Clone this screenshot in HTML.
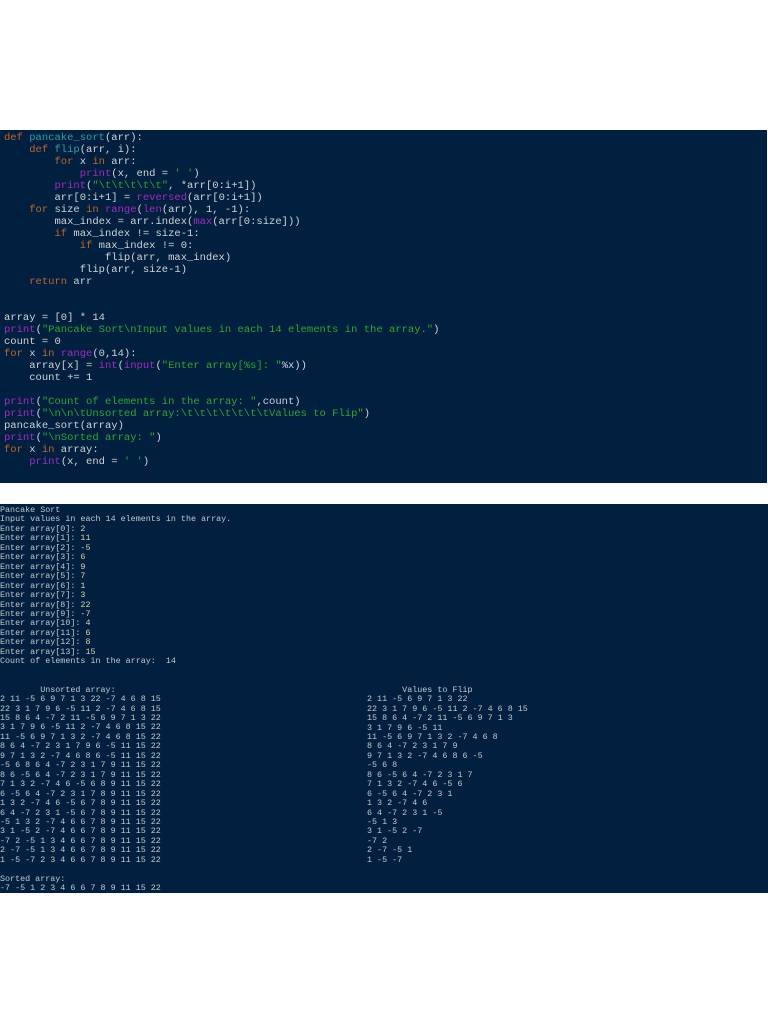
<!DOCTYPE html>
<html><head><meta charset="utf-8"><style>
html,body{margin:0;padding:0;background:#fff;width:768px;height:1024px;overflow:hidden;position:relative}
.p{position:absolute;left:0;background:#01203f;overflow:hidden}
pre{margin:0;position:absolute;font-family:"Liberation Mono",monospace;white-space:pre}
.code{font-size:10.53px;line-height:12px;color:#cfd3d6;left:4px;top:132px}
.k{color:#c0652a}.f{color:#2b9eb0}.b{color:#a42ac0}.s{color:#2fa62f}
.o{font-size:8.38px;line-height:9.46px;color:#c4c8cc}
.n{color:#d8d2a8}
</style></head><body>
<div class="p" style="top:130px;width:767px;height:353px"></div>
<pre class="code"><span class="k">def</span> <span class="f">pancake_sort</span>(arr):
    <span class="k">def</span> <span class="f">flip</span>(arr, i):
        <span class="k">for</span> x <span class="k">in</span> arr:
            <span class="b">print</span>(x, end = <span class="s">' '</span>)
        <span class="b">print</span>(<span class="s">"\t\t\t\t\t"</span>, *arr[0:i+1])
        arr[0:i+1] = <span class="b">reversed</span>(arr[0:i+1])
    <span class="k">for</span> size <span class="k">in</span> <span class="b">range</span>(<span class="b">len</span>(arr), 1, -1):
        max_index = arr.index(<span class="b">max</span>(arr[0:size]))
        <span class="k">if</span> max_index != size-1:
            <span class="k">if</span> max_index != 0:
                flip(arr, max_index)
            flip(arr, size-1)
    <span class="k">return</span> arr


array = [0] * 14
<span class="b">print</span>(<span class="s">"Pancake Sort\nInput values in each 14 elements in the array."</span>)
count = 0
<span class="k">for</span> x <span class="k">in</span> <span class="b">range</span>(0,14):
    array[x] = <span class="b">int</span>(<span class="b">input</span>(<span class="s">"Enter array[%s]: "</span>%x))
    count += 1

<span class="b">print</span>(<span class="s">"Count of elements in the array: "</span>,count)
<span class="b">print</span>(<span class="s">"\n\n\tUnsorted array:\t\t\t\t\t\t\tValues to Flip"</span>)
pancake_sort(array)
<span class="b">print</span>(<span class="s">"\nSorted array: "</span>)
<span class="k">for</span> x <span class="k">in</span> array:
    <span class="b">print</span>(x, end = <span class="s">' '</span>)</pre>
<div class="p" style="top:504px;width:768px;height:389px">
<pre class="o" style="left:0;top:2px">Pancake Sort
Input values in each 14 elements in the array.
Enter array[0]: <span class="n">2</span>
Enter array[1]: <span class="n">11</span>
Enter array[2]: <span class="n">-5</span>
Enter array[3]: <span class="n">6</span>
Enter array[4]: <span class="n">9</span>
Enter array[5]: <span class="n">7</span>
Enter array[6]: <span class="n">1</span>
Enter array[7]: <span class="n">3</span>
Enter array[8]: <span class="n">22</span>
Enter array[9]: <span class="n">-7</span>
Enter array[10]: <span class="n">4</span>
Enter array[11]: <span class="n">6</span>
Enter array[12]: <span class="n">8</span>
Enter array[13]: <span class="n">15</span>
Count of elements in the array:  14


        Unsorted array:
2 11 -5 6 9 7 1 3 22 -7 4 6 8 15
22 3 1 7 9 6 -5 11 2 -7 4 6 8 15
15 8 6 4 -7 2 11 -5 6 9 7 1 3 22
3 1 7 9 6 -5 11 2 -7 4 6 8 15 22
11 -5 6 9 7 1 3 2 -7 4 6 8 15 22
8 6 4 -7 2 3 1 7 9 6 -5 11 15 22
9 7 1 3 2 -7 4 6 8 6 -5 11 15 22
-5 6 8 6 4 -7 2 3 1 7 9 11 15 22
8 6 -5 6 4 -7 2 3 1 7 9 11 15 22
7 1 3 2 -7 4 6 -5 6 8 9 11 15 22
6 -5 6 4 -7 2 3 1 7 8 9 11 15 22
1 3 2 -7 4 6 -5 6 7 8 9 11 15 22
6 4 -7 2 3 1 -5 6 7 8 9 11 15 22
-5 1 3 2 -7 4 6 6 7 8 9 11 15 22
3 1 -5 2 -7 4 6 6 7 8 9 11 15 22
-7 2 -5 1 3 4 6 6 7 8 9 11 15 22
2 -7 -5 1 3 4 6 6 7 8 9 11 15 22
1 -5 -7 2 3 4 6 6 7 8 9 11 15 22

Sorted array:
-7 -5 1 2 3 4 6 6 7 8 9 11 15 22</pre>
<pre class="o" style="left:367px;top:181.7px">       Values to Flip
2 11 -5 6 9 7 1 3 22
22 3 1 7 9 6 -5 11 2 -7 4 6 8 15
15 8 6 4 -7 2 11 -5 6 9 7 1 3
3 1 7 9 6 -5 11
11 -5 6 9 7 1 3 2 -7 4 6 8
8 6 4 -7 2 3 1 7 9
9 7 1 3 2 -7 4 6 8 6 -5
-5 6 8
8 6 -5 6 4 -7 2 3 1 7
7 1 3 2 -7 4 6 -5 6
6 -5 6 4 -7 2 3 1
1 3 2 -7 4 6
6 4 -7 2 3 1 -5
-5 1 3
3 1 -5 2 -7
-7 2
2 -7 -5 1
1 -5 -7</pre>
</div>
</body></html>
